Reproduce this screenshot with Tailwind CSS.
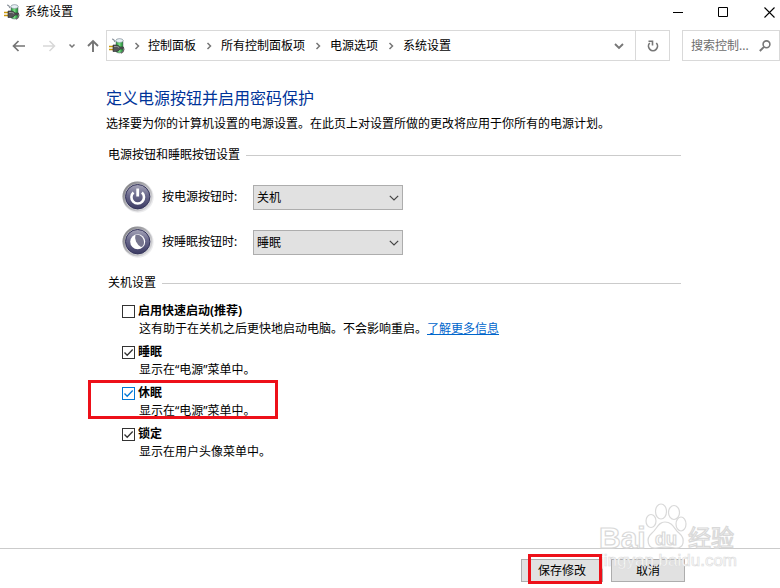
<!DOCTYPE html>
<html lang="zh-CN">
<head>
<meta charset="utf-8">
<meta name="viewport" content="width=device-width, initial-scale=1">
<title>系统设置</title>
<script src="https://cdn.jsdelivr.net/npm/@tailwindcss/browser@4"></script>
</head>
<body class="relative flex min-h-screen flex-col overflow-hidden bg-white font-['Noto_Sans','Noto_Sans_CJK_SC',sans-serif] text-xs text-black">
<svg class="absolute h-0 w-0" aria-hidden="true">
  <defs>
    <linearGradient id="cell" x1="0" x2="1"><stop offset="0" stop-color="#1c8a2c"/><stop offset=".45" stop-color="#7fe08a"/><stop offset="1" stop-color="#15812a"/></linearGradient>
    <linearGradient id="rim" x1="0" y1="0" x2="1" y2="1"><stop offset="0" stop-color="#77777b"/><stop offset=".5" stop-color="#b4b4b8"/><stop offset="1" stop-color="#e4e4e6"/></linearGradient>
    <linearGradient id="face" x1="0" y1="0" x2="0" y2="1"><stop offset="0" stop-color="#a5a4b8"/><stop offset=".45" stop-color="#6a698c"/><stop offset="1" stop-color="#3c3b63"/></linearGradient>
    <symbol id="plug" viewBox="0 0 16 16">
      <path d="M7 2.500Q7 1 10.500 1T14 2.500V13Q14 15 10.500 15T7 13Z" fill="url(#cell)" stroke="#778" stroke-width=".6"/>
      <ellipse cx="10.500" cy="2.600" rx="3.600" ry="1.900" fill="#e8f0f5" stroke="#8b98a5" stroke-width=".6"/>
      <path d="M3 1Q5 1 6 4" fill="none" stroke="#8b929b" stroke-width="1.200"/>
      <path d="M0 8.500H5M0 11.500H5" stroke="#c9990c" stroke-width="1.600"/>
      <path d="M4 7H7Q9.500 7 11 9H14.500V11H11Q9.500 13.500 7 13.500H4Z" fill="#555558" stroke="#262628" stroke-width=".6"/>
      <path d="M5 8.500H7.500Q9 8.500 10 9.500" fill="none" stroke="#999"/>
      <path d="M14.500 10Q16 13 12 15.200" fill="none" stroke="#666" stroke-width="1.200"/>
    </symbol>
    <symbol id="crumb" viewBox="0 0 6 8"><path d="M1.500 1L4.500 4L1.500 7" fill="none" stroke="#777" stroke-width="1.500"/></symbol>
    <symbol id="down" viewBox="0 0 10 6"><path d="M.8.8L5 5L9.200.8" fill="none" stroke="currentColor" stroke-width="1.200"/></symbol>
    <symbol id="tick" viewBox="0 0 13 13"><path d="M2.500 6.500L5.200 9.300L10.700 3.500" fill="none" stroke="currentColor" stroke-width="1.300"/></symbol>
    <symbol id="orb" viewBox="0 0 32 32">
      <circle cx="16" cy="16" r="15.700" fill="#ececee"/>
      <circle cx="15.500" cy="15.500" r="15" fill="url(#rim)"/>
      <circle cx="15.700" cy="15.700" r="12.900" fill="#d2d2da"/>
      <circle cx="15.700" cy="15.700" r="12.200" fill="url(#face)" stroke="#34335a"/>
    </symbol>
  </defs>
</svg>

<header>
  <div class="flex h-6 items-center">
    <svg class="ml-1 h-4 w-4"><use href="#plug"/></svg>
    <h1 class="ml-[5px] leading-5">系统设置</h1>
    <div class="ml-auto flex items-center">
      <button aria-label="最小化" class="flex h-6 w-[45px] items-center justify-center"><svg class="h-[11px] w-[11px]" viewBox="0 0 11 11"><path d="M0 5.500H10" stroke="#000"/></svg></button>
      <button aria-label="最大化" class="flex h-6 w-[45px] items-center justify-center"><svg class="h-[11px] w-[11px]" viewBox="0 0 11 11"><path d="M.5.500H9.500V9.500H.5Z" fill="none" stroke="#000"/></svg></button>
      <button aria-label="关闭" class="flex h-6 w-[34px] items-center justify-end pr-[5px]"><svg class="h-[11px] w-[11px]" viewBox="0 0 11 11"><path d="M.5.500L10.500 10.500M10.500.500L.5 10.500" stroke="#000" stroke-width="1.100"/></svg></button>
    </div>
  </div>
  <div class="flex items-center pt-1.5">
    <nav class="flex w-[106px] shrink-0 items-center pl-3" aria-label="导航">
      <button aria-label="后退"><svg class="h-[14px] w-[14px]" viewBox="0 0 14 14"><path d="M13 7H1.500M6.500 2L1.500 7L6.500 12" fill="none" stroke="#747474" stroke-width="1.700"/></svg></button>
      <button aria-label="前进" class="ml-4"><svg class="h-[14px] w-[14px]" viewBox="0 0 14 14"><path d="M1 7H12.500M7.500 2L12.500 7L7.500 12" fill="none" stroke="#d8d8d8" stroke-width="1.500"/></svg></button>
      <button aria-label="最近浏览的位置" class="ml-3"><svg class="h-2 w-2" viewBox="0 0 8 8"><path d="M1.500 2.500L4 5L6.500 2.500" fill="none" stroke="#777" stroke-width="1.500"/></svg></button>
      <button aria-label="上移" class="ml-[10px]"><svg class="h-[14px] w-[14px]" viewBox="0 0 14 14"><path d="M7 13V2M2 7L7 2L12 7" fill="none" stroke="#747474" stroke-width="1.900"/></svg></button>
    </nav>
    <div class="flex h-[31px] flex-1 items-stretch border border-[#d9d9d9]">
      <ol class="flex flex-1 items-center pl-0.5 leading-5">
        <li><svg class="h-4 w-4"><use href="#plug"/></svg></li>
        <li class="flex w-[23px] justify-center"><svg class="h-2 w-1.5"><use href="#crumb"/></svg></li>
        <li><a href="#">控制面板</a></li>
        <li class="flex w-[25px] justify-center"><svg class="h-2 w-1.5"><use href="#crumb"/></svg></li>
        <li><a href="#">所有控制面板项</a></li>
        <li class="flex w-[25px] justify-center"><svg class="h-2 w-1.5"><use href="#crumb"/></svg></li>
        <li><a href="#">电源选项</a></li>
        <li class="flex w-[25px] justify-center"><svg class="h-2 w-1.5"><use href="#crumb"/></svg></li>
        <li><a href="#">系统设置</a></li>
      </ol>
      <button aria-label="以前的位置" class="flex w-8 items-center justify-center"><svg class="h-[10px] w-[10px]" viewBox="0 0 10 10"><path d="M1 3L5 7L9 3" fill="none" stroke="#777" stroke-width="1.900"/></svg></button>
      <button aria-label="刷新" class="flex w-[34px] items-center justify-center border-l border-[#d9d9d9]"><svg class="h-3 w-3" viewBox="0 0 12 12"><path d="M2.700 3A4.500 4.500 0 1 0 9.300 3" fill="none" stroke="#777" stroke-width="1.700"/><path d="M1.500 1.300H5.500V5.500" fill="none" stroke="#777" stroke-width="1.600"/></svg></button>
    </div>
    <label class="ml-3 flex h-[31px] w-[98px] items-center border border-[#d9d9d9] pl-2">
      <input aria-label="搜索控制面板" type="text" placeholder="搜索控制..." class="w-[68px] leading-5 outline-none placeholder:text-[#6d6d6d]">
      <svg class="h-3 w-3" viewBox="0 0 12 12"><circle cx="7.500" cy="4.300" r="3.400" fill="none" stroke="#777" stroke-width="1.600"/><path d="M5 6.800L.8 11" stroke="#777" stroke-width="1.900"/></svg>
    </label>
  </div>
</header>

<main class="flex-1 pt-[25px] pr-[99px] pb-10 pl-[106px]">
  <h2 class="text-base leading-6 text-[#003399]">定义电源按钮并启用密码保护</h2>
  <p class="mt-1 leading-5">选择要为你的计算机设置的电源设置。在此页上对设置所做的更改将应用于你所有的电源计划。</p>

  <section class="mt-[11px] pl-0.5">
    <div class="flex items-center gap-1.5 leading-5"><h3>电源按钮和睡眠按钮设置</h3><hr class="flex-1 border-[#cbcbcb]"></div>
    <div class="mt-4 flex flex-col gap-[13px] pl-[14px]">
      <div class="flex h-8 items-center">
        <svg class="h-8 w-8" viewBox="0 0 32 32"><use href="#orb"/><path d="M11.500 11.500A6.300 6.300 0 1 0 19.900 11.500" fill="none" stroke="#fff" stroke-width="2.600"/><path d="M15.700 7.500V15.500" stroke="#fff" stroke-width="2.800"/></svg>
        <label for="power" class="ml-2 w-[91px] leading-5">按电源按钮时:</label>
        <div class="relative">
          <select id="power" class="h-[25px] w-[150px] appearance-none border border-[#adadad] bg-[#e1e1e1] pt-px pl-[3px] leading-5"><option>关机</option><option>睡眠</option><option>休眠</option></select>
          <svg class="pointer-events-none absolute top-[10px] right-1 h-1.5 w-[10px] text-[#444]"><use href="#down"/></svg>
        </div>
      </div>
      <div class="flex h-8 items-center">
        <svg class="h-8 w-8" viewBox="0 0 32 32"><use href="#orb"/><circle cx="15.700" cy="15.700" r="7.500" fill="#fff"/><path d="M13.500 9Q17 8 20 11Q23 15 21.500 19Q20.500 21 19 21Q15.500 19 14 15.500Q12.500 11.500 13.500 9Z" fill="#77768f"/></svg>
        <label for="sleep" class="ml-2 w-[91px] leading-5">按睡眠按钮时:</label>
        <div class="relative">
          <select id="sleep" class="h-[25px] w-[150px] appearance-none border border-[#adadad] bg-[#e1e1e1] pt-px pl-[3px] leading-5"><option>睡眠</option><option>休眠</option><option>关机</option></select>
          <svg class="pointer-events-none absolute top-[10px] right-1 h-1.5 w-[10px] text-[#444]"><use href="#down"/></svg>
        </div>
      </div>
    </div>
  </section>

  <section class="mt-[15px] pl-0.5">
    <div class="flex items-center gap-1.5 leading-5"><h3>关机设置</h3><hr class="flex-1 border-[#cbcbcb]"></div>
    <ul class="mt-[9px] flex flex-col gap-[5px] pl-[14px] leading-[18px]">
      <li>
        <div class="flex items-center gap-[3px]">
          <input id="fast" type="checkbox" class="h-[13px] w-[13px] appearance-none border border-[#333]">
          <label for="fast" class="font-bold">启用快速启动(推荐)</label>
        </div>
        <p class="pl-[17px]">这有助于在关机之后更快地启动电脑。不会影响重启。<a href="#" class="text-[#0066cc] underline">了解更多信息</a></p>
      </li>
      <li>
        <div class="flex items-center gap-[3px]">
          <span class="grid"><input id="opt-sleep" type="checkbox" checked class="col-start-1 row-start-1 h-[13px] w-[13px] appearance-none border border-[#333]"><svg class="pointer-events-none col-start-1 row-start-1 h-[13px] w-[13px] text-[#333]"><use href="#tick"/></svg></span>
          <label for="opt-sleep" class="font-bold">睡眠</label>
        </div>
        <p class="pl-[17px]">显示在“电源”菜单中。</p>
      </li>
      <li class="relative">
        <div class="flex items-center gap-[3px]">
          <span class="grid"><input id="opt-hibernate" type="checkbox" checked class="col-start-1 row-start-1 h-[13px] w-[13px] appearance-none border border-[#0078d7]"><svg class="pointer-events-none col-start-1 row-start-1 h-[13px] w-[13px] text-[#0078d7]"><use href="#tick"/></svg></span>
          <label for="opt-hibernate" class="font-bold">休眠</label>
        </div>
        <p class="pl-[17px]">显示在“电源”菜单中。</p>
        <div class="pointer-events-none absolute -top-1 -left-[34px] h-[39px] w-[190px] border-3 border-[#ed1019]"></div>
      </li>
      <li>
        <div class="flex items-center gap-[3px]">
          <span class="grid"><input id="opt-lock" type="checkbox" checked class="col-start-1 row-start-1 h-[13px] w-[13px] appearance-none border border-[#333]"><svg class="pointer-events-none col-start-1 row-start-1 h-[13px] w-[13px] text-[#333]"><use href="#tick"/></svg></span>
          <label for="opt-lock" class="font-bold">锁定</label>
        </div>
        <p class="pl-[17px]">显示在用户头像菜单中。</p>
      </li>
    </ul>
  </section>
</main>

<footer class="flex h-10 justify-end gap-2 border-t border-[#cbcbcb] pt-[10px] pr-[95px]">
  <div class="relative">
    <button class="h-[23px] w-[82px] border border-[#adadad] bg-[#e1e1e1] leading-5">保存修改</button>
    <div class="pointer-events-none absolute -top-[5px] left-[7px] z-10 h-[30px] w-[74px] border-3 border-[#ed1019]"></div>
  </div>
  <button class="h-[23px] w-[74px] border border-[#adadad] bg-[#e1e1e1] leading-5">取消</button>
</footer>

<!-- Watermark -->
<svg class="pointer-events-none absolute right-10 bottom-3 h-[74px] w-[142px]" viewBox="0 0 142 74" aria-hidden="true">
  <g fill="#fff" stroke="#d9d9d9" stroke-width="1.200">
    <ellipse cx="53" cy="19" rx="5" ry="6.500"/><ellipse cx="63" cy="9.500" rx="5.500" ry="7.500"/><ellipse cx="76" cy="10.500" rx="5.500" ry="7"/><ellipse cx="83" cy="22" rx="5" ry="7"/>
    <path d="M67 20C60 20 59 27 54 31C47 37 50 47 58 46C64 45 71 45 77 46C86 47 88 37 81 31C76 27 75 20 67 20Z"/>
    <g font-family="Liberation Sans" font-weight="bold"><text x="1" y="46" font-size="30">Bai</text><text x="57" y="43" font-size="18">du</text></g>
    <text x="90" y="44" font-family="Noto Sans CJK SC" font-size="23">经验</text>
  </g>
  <text x="2" y="64" font-family="Liberation Sans" font-size="17" fill="#fff" stroke="#dedede" stroke-width=".7">jingyan.baidu.com</text>
</svg>
</body>
</html>
